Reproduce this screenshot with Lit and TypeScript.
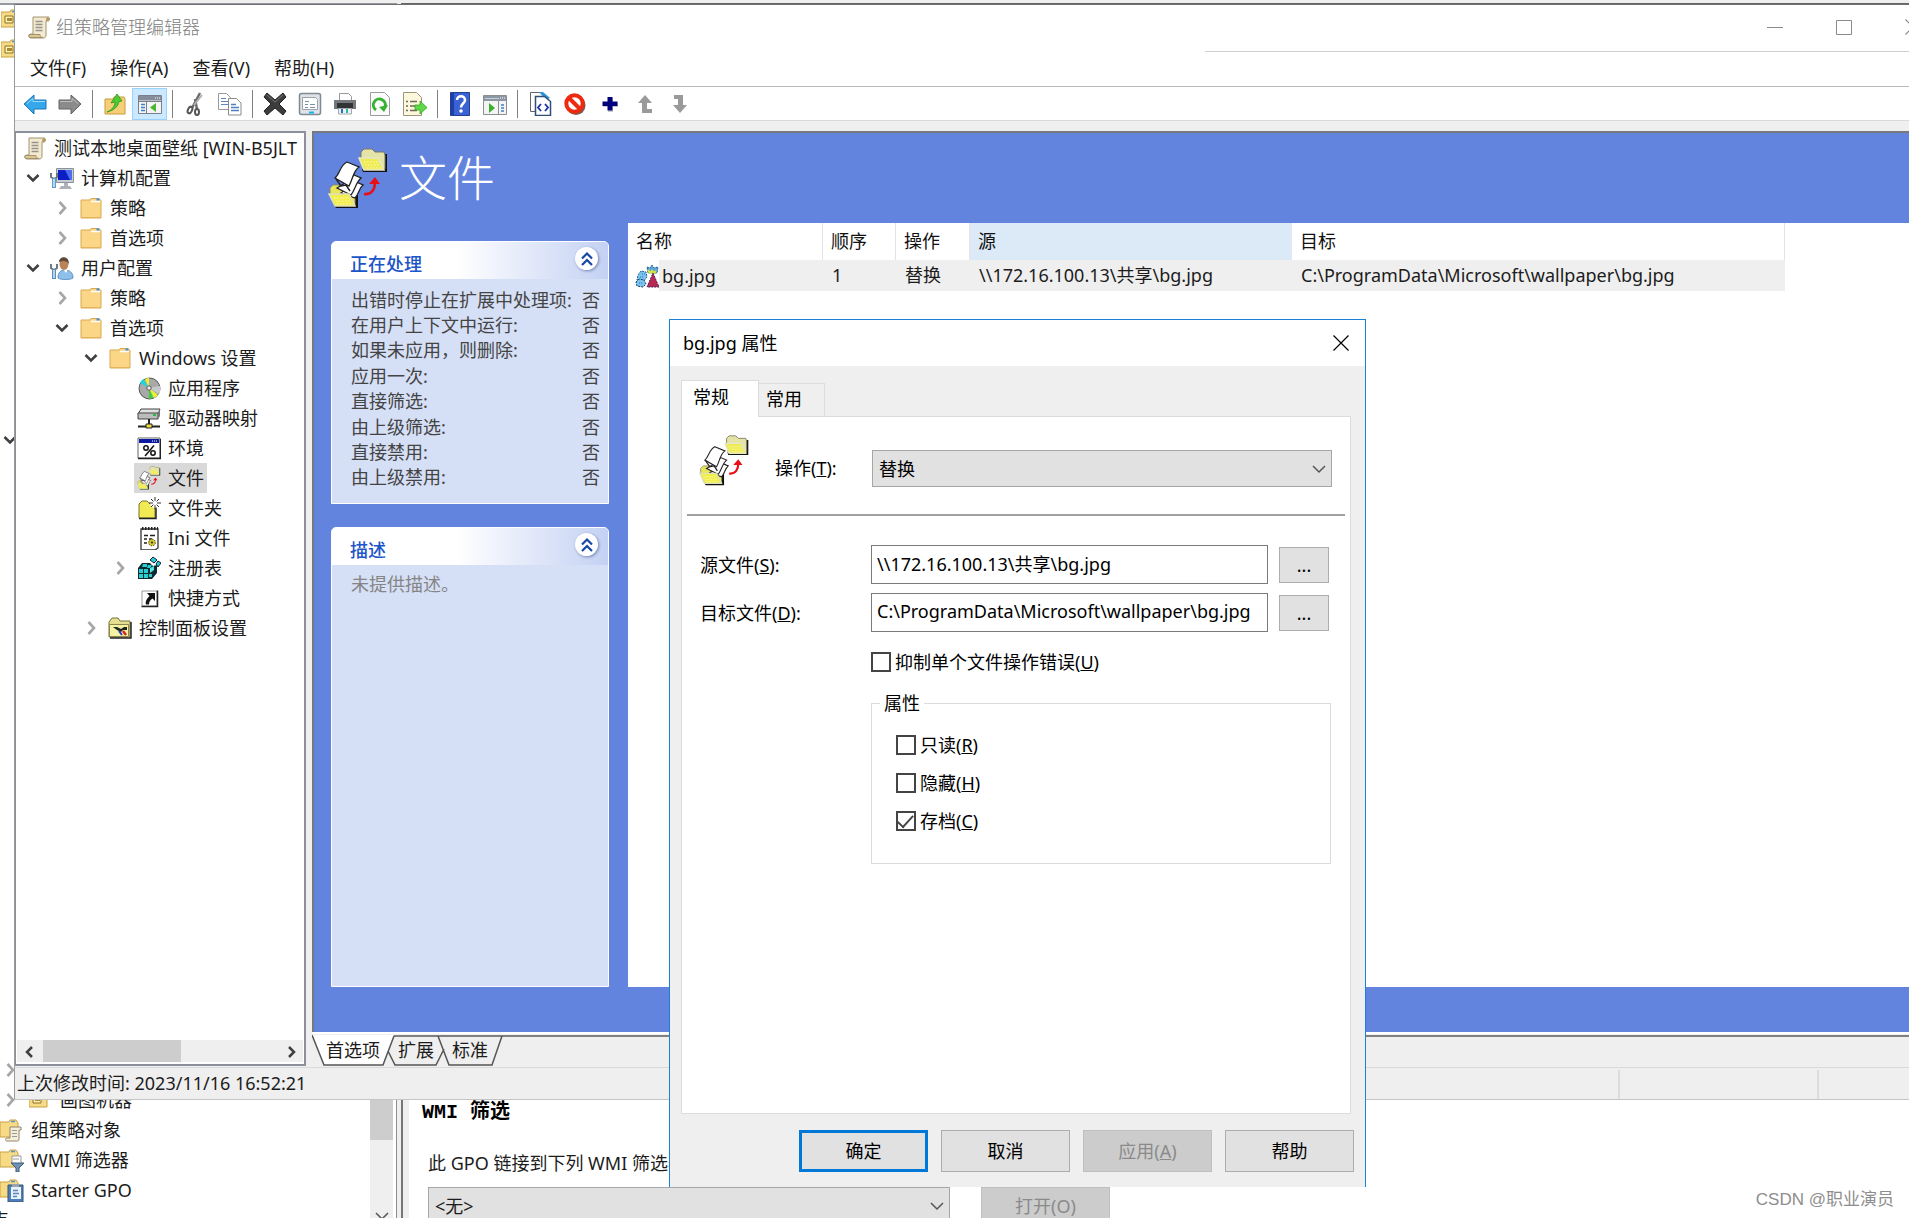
import { LitElement, html, svg, css, nothing, type TemplateResult } from "lit";
import { customElement, state } from "lit/decorators.js";
import { classMap } from "lit/directives/class-map.js";
import { styleMap } from "lit/directives/style-map.js";

const folderBody = svg`
  <path d="M2 4h9l1-1.500h8l2 2V22H2z" fill="#fbd686" stroke="#d9a94e"/>
  <path d="M12 5.500h9" stroke="#fff" stroke-width="1.500"/>
  <path d="M17.500 3.500h3" stroke="#3f8fdc" stroke-width="2"/>
  <path d="M2.500 21.500h19" stroke="#e5b35c"/>`;

const gpoFolder = svg`
  <path d="M0 4h9l1-2h6l2 3V19H0z" fill="#f6da85" stroke="#c9a040"/>
  <path d="M11 3.500h4" stroke="#4d95d8" stroke-width="1.500"/>`;

const moveFiles = svg`
  <path d="M56 6h3v18H35l-1-3z" fill="#111"/>
  <path d="M33 10V4l3-3h8l3 3h9l1 3v14H35z" fill="#e4e4a8" stroke="#77775a"/>
  <path d="M31 10h19l6 12H36z" fill="#efec52" stroke="#e6e6cc" stroke-width="1.500"/>
  <path d="M36 14h14M37 17h15M39 20h15" stroke="#fbfbc4" stroke-dasharray="1.500 1.500"/>
  <path d="M27 42h3v18H8l-2-3z" fill="#111"/>
  <path d="M2 46v-6l3-3h6l3 4h13v16H6z" fill="#e9e65c" stroke="#8b8b5a"/>
  <path d="M13 45c6-4 9-10 15-11l7 3c-4 3-4 9-8 13z" fill="#fff" stroke="#222" stroke-width="1.300"/>
  <path d="M9 40c6-3 12-8 17-13l7 3c-5 4-6 12-10 17z" fill="#fff" stroke="#222" stroke-width="1.300"/>
  <path d="M19 14l12 5c-6 4-6 12-10 19L7 30c5-4 5-13 12-16z" fill="#fff" stroke="#222" stroke-width="1.300"/>
  <path d="M8 31l5 7 5-1 4 6" fill="none" stroke="#222" stroke-width="1.500"/>
  <path d="M1 46h20l6 12H7z" fill="#f2ee4a" stroke="#e0e0bc" stroke-width="1.500"/>
  <path d="M6 50h14M8 53h14M9 56h15" stroke="#fbfbc4" stroke-dasharray="1.500 1.500"/>
  <path d="M36 46c8 1 11-5 11-12" fill="none" stroke="#e80f16" stroke-width="2.600"/>
  <path d="M41 36l6-7 5 7z" fill="#e80f16"/>`;

/** Glyphs drawn on a 24-unit grid, except where a view box is listed in BOXES. */
const ICONS: Record<string, TemplateResult> = {
  scroll: svg`
    <path d="M6 2h15c2 0 2 4 0 4h-2v14c0 2-1 3-3 3H4c-3 0-3-4 0-4h2z" fill="#f3ead2" stroke="#a3946e"/>
    <path d="M19 6c0-2 0-4 2-4s2 4 0 4z" fill="#b99b62"/>
    <path d="M2 19.500h11c0 2 1 3 3 3H4c-2 0-2-1-2-3z" fill="#dcc792" stroke="#a3946e"/>
    <path d="M8.500 6.500h7M8.500 9.500h7M8.500 12.500h7M8.500 15.500h7" stroke="#98948b" stroke-width="1.300"/>`,
  back: svg`<path d="M1 12l10-9v5h12v9H11v5z" fill="#35a7ea" stroke="#1877b8"/><path d="M4 11.500l6-5v3h12" stroke="#9bdcfb" fill="none"/>`,
  forward: svg`<path d="M23 12L13 3v5H1v9h12v5z" fill="#8b8b8b" stroke="#626262"/><path d="M2 9.500h12v-3l6 5" stroke="#bdbdbd" fill="none"/>`,
  upFolder: svg`
    <path d="M2 7h8l1-2h10l1 2v15H2z" fill="#f5ce76" stroke="#c99a3e"/>
    <path d="M4 20c5-2 8-6 8-10l-4 1 6-9 5 7-3 .500c-1 5-5 9-12 10.500z" fill="#4ecb34" stroke="#2b951a" stroke-width=".800"/>`,
  treePane: svg`
    <path d="M.500 3.500h23v18H.500z" fill="#f4f4f4" stroke="#77808c"/>
    <path d="M1 4h22v4.500H1z" fill="#858d9b"/><path d="M17 6h5" stroke="#fff" stroke-dasharray="1 1"/>
    <path d="M8.500 9v12M1 9.500h22" stroke="#77808c"/>
    <path d="M3 12.500h4M3 15.500h4M3 18.500h4" stroke="#3f7fc4" stroke-width="1.500"/>
    <path d="M18 11v9l-6-4.500z" fill="#4bb530"/>`,
  cut: svg`
    <path d="M17 1L9 16M12 7l2 10" stroke="#6d6d6d" stroke-width="2.500"/>
    <path d="M19 3l-8 10" stroke="#b0b0b0" stroke-width="2"/>
    <ellipse cx="7" cy="18" rx="2" ry="3.500" fill="none" stroke="#555" stroke-width="2" transform="rotate(25 7 18)"/>
    <ellipse cx="14" cy="20" rx="2" ry="3" fill="none" stroke="#555" stroke-width="2"/>`,
  copy: svg`
    <path d="M.500 1.500h8l4 4v12H.500z" fill="#fff" stroke="#9b9b9b"/><path d="M3 6.500h5M3 9.500h7M3 12.500h7" stroke="#5c88bd"/>
    <path d="M10.500 6.500h8l4.500 4.500v12H10.500z" fill="#fff" stroke="#8b8b8b"/><path d="M13 12.500h5M13 15.500h8M13 18.500h8" stroke="#4e80bd" stroke-width="1.300"/>`,
  remove: svg`<path d="M4 1l8 7 8-7 3 4-7 7 7 7-3 4-8-7-8 7-3-4 7-7-7-7z" fill="#3d3d3d" stroke="#222"/><path d="M4 3l8 7 8-7" stroke="#777" fill="none"/>`,
  properties: svg`
    <rect x="1.500" y="1.500" width="21" height="21" rx="2" fill="#dfe3e8" stroke="#808890" stroke-width="1.500"/>
    <path d="M4.500 5.500h13l2 2v10h-15z" fill="#fff" stroke="#9aa2aa"/>
    <path d="M7 9.500h4M7 12.500h3M12 12.500h5M7 15.500h3M12 15.500h5" stroke="#7a8fa8"/>
    <path d="M11 20.500h5" stroke="#12b4f0" stroke-width="2"/>`,
  print: svg`
    <path d="M6.500 1.500h9l3 3v6h-12z" fill="#fff" stroke="#999"/>
    <path d="M1 8h22v9H1z" fill="#74787d"/><path d="M4 11h16v5H4z" fill="#303236"/>
    <path d="M5.500 16.500h13V22h-13z" fill="#e8f4fb" stroke="#a8a8a8"/>
    <path d="M9 17v4" stroke="#2a6fc0" stroke-width="2"/><path d="M14 17v4" stroke="#35b59a" stroke-width="2"/>`,
  refresh: svg`
    <path d="M2.500 .500h14l5 5v18h-19z" fill="#fbfbfb" stroke="#9c9c9c"/>
    <path d="M8 18a6 6 0 1 1 9-3" fill="none" stroke="#35b230" stroke-width="3"/><path d="M20 13l-4 7-5-5z" fill="#35b230"/>`,
  exportList: svg`
    <path d="M.500 .500h13l5 5v18H.500z" fill="#fdf7dc" stroke="#9c967e"/>
    <path d="M3 9.500h2M7 9.500h7M3 14h2M7 14h6M3 18.500h2M7 18.500h7" stroke="#6d6a5c" stroke-width="1.500"/>
    <path d="M12 13h5V9l7 6.500-7 6.500v-4h-5z" fill="#5ed846" stroke="#36a524" stroke-width=".800"/>`,
  help: svg`
    <path d="M2.500 .500h19v23h-19z" fill="#3b62d2" stroke="#24408f"/><path d="M4.500 1v22" stroke="#1c3fae" stroke-width="3"/>
    <path d="M9 8c0-5 8-5 8 0 0 3.500-4 3.500-4 7.500" fill="none" stroke="#fff" stroke-width="2.500"/><circle cx="13" cy="19" r="1.800" fill="#fff"/>`,
  actionPane: svg`
    <path d="M.500 3.500h23v19H.500z" fill="#f4f4f4" stroke="#8a8f93"/>
    <path d="M1 4h22v5H1z" fill="#8d97a4"/><path d="M2 6.500h14" stroke="#c8d0d8"/><path d="M17 6h5" stroke="#fff" stroke-dasharray="1 1"/>
    <path d="M15.500 9v13" stroke="#8a8f93"/><path d="M6 11v10l6-5z" fill="#3fae2e"/>
    <path d="M18 13h3M18 16h3M18 19h3" stroke="#3f7fc4" stroke-width="1.500"/>`,
  pages: svg`
    <path d="M2.500 .500h11l3 3v16h-14z" fill="#fff" stroke="#666"/><path d="M11 0h4l7 6-4 2z" fill="#2b95d8"/>
    <path d="M7.500 4.500h9l6 5v14h-15z" fill="#fff" stroke="#2f4e78" stroke-width="1.500"/>
    <path d="M13 12l-3 3.500 3 3.500M17 12l3 3.500-3 3.500" fill="none" stroke="#1b2fa8" stroke-width="1.800"/>`,
  stop: svg`
    <circle cx="13" cy="13.500" r="9.500" fill="#7b5a50"/><circle cx="11.500" cy="11.500" r="8.200" fill="#fff" stroke="#ee2a10" stroke-width="4"/>
    <path d="M6 6l11 11" stroke="#ee2a10" stroke-width="4"/>`,
  add: svg`<path d="M10 6h5v5h5v4h-5v5h-5v-5H5v-4h5z" fill="#999" opacity=".500"/><path d="M9.500 5h5v4.500h5v4.500h-5v4.500h-5V14h-5V9.500h5z" fill="#00007c"/>`,
  up: svg`<path d="M12 3l7 8h-5v6h5v4H9V11H5z" fill="#9a9a9a"/>`,
  down: svg`<path d="M12 21l7-8h-4V3H6v4h4v6H5z" fill="#9a9a9a"/>`,
  computer: svg`
    <path d="M6.500 2.500h17v14h-17z" fill="#c9cdd2" stroke="#8c9299"/><path d="M8 4h14v10H8z" fill="#0c1fc4"/><path d="M15 4h7v10h-2z" fill="#4d6cf0"/>
    <path d="M11 20h9l2 3H9zM14 17h4v3h-4z" fill="#aeb2b8"/>
    <path d="M1 7v4l3 2 3-2V7" fill="none" stroke="#6f7880" stroke-width="2"/><path d="M4 12v10" stroke="#5f9ccb" stroke-width="4"/><path d="M4 13v8" stroke="#d4ebfa" stroke-width="1.500"/>`,
  user: svg`
    <path d="M8 22c0-6 3-8 7-8s8 2 8 8c-3 2-12 2-15 0z" fill="#8fc0ea" stroke="#5c93c4"/>
    <path d="M13 13l3 4 2-4z" fill="#fff"/><ellipse cx="14" cy="8" rx="4.500" ry="6" fill="#b98558"/><path d="M9 6c0-6 10-7 10 2-1-2-3-3-6-3z" fill="#5e4a3a"/>
    <path d="M1 8v4l3 2 3-2V8" fill="none" stroke="#6f7880" stroke-width="2"/><path d="M4 13v10" stroke="#5f8fb8" stroke-width="4"/><path d="M4 14v8" stroke="#d4ebfa" stroke-width="1.500"/>`,
  folder: folderBody,
  disc: svg`
    <circle cx="12.500" cy="12.500" r="10.500" fill="#a9a9a9" stroke="#555"/><path d="M12 12L3 7a10 10 0 0 1 3-4z" fill="#19d7e0"/>
    <path d="M12 12L8 3a10 10 0 0 1 4-1z" fill="#e9f233"/><path d="M12 12l9 7a10 10 0 0 1-4 3z" fill="#e9f233"/>
    <path d="M12 12l4 10a10 10 0 0 1-4 .500z" fill="#37d33a"/><path d="M12 12l11-2a10 10 0 0 1-1 8z" fill="#c8c8c8"/>
    <circle cx="12" cy="12" r="2.200" fill="#eee" stroke="#555"/>`,
  drive: svg`
    <path d="M4 3h19l-2 5H1z" fill="#e0e0e0" stroke="#444"/><path d="M1 7h20v6H1z" fill="#bcbcbc" stroke="#444"/><path d="M21 8l2-5v7l-2 3z" fill="#777"/>
    <path d="M16 9h3" stroke="#22c03a" stroke-width="2"/><path d="M12 13v6M1 20.500h22" stroke="#222" stroke-width="2"/><path d="M9 18h6v4H9z" fill="#e8dc3c" stroke="#222"/>`,
  environment: svg`
    <path d="M1 2h22v20H1z" fill="#fff" stroke="#666"/><path d="M2 3h20v4H2z" fill="#0b1aa0"/><path d="M15 5h6" stroke="#fff" stroke-dasharray="1 1"/>
    <circle cx="9" cy="12" r="2.200" fill="none" stroke="#111" stroke-width="1.500"/><circle cx="16" cy="17" r="2.200" fill="none" stroke="#111" stroke-width="1.500"/><path d="M17 9.500L8 20" stroke="#111" stroke-width="1.500"/>
    <path d="M1 22.500h22.500V3" fill="none" stroke="#222" stroke-width="1.500"/>`,
  files: moveFiles,
  newFolder: svg`
    <path d="M2 8l3-3h5l3 3h5v14H2z" fill="#f0ea55" stroke="#77742a"/><path d="M2 22.500h17V9" fill="none" stroke="#222" stroke-width="1.500"/>
    <circle cx="18" cy="7" r="5" fill="#fff"/><path d="M18 1v12M12 7h12M14 3l8 8M22 3l-8 8" stroke="#333"/><circle cx="18" cy="7" r="2.200" fill="#fff"/>`,
  ini: svg`
    <path d="M4 3h17v19l-3 2H4z" fill="#fff" stroke="#333" stroke-width="1.300"/><path d="M5 2.500h16" stroke="#222" stroke-width="3" stroke-dasharray="1.500 1.500"/>
    <path d="M7 9.500h4M13 9.500h5M7 13h3M12 13h3M7 17h3" stroke="#222" stroke-width="1.500"/><circle cx="15" cy="16.500" r="3.300" fill="#d8c92c" stroke="#4b4510" stroke-dasharray="1.500 1"/><circle cx="15" cy="16.500" r="1" fill="#222"/>`,
  registry: svg`
    <path d="M1 12l4-5h8l3 3 4-1v8l-5 6H1z" fill="#0d2b2f"/>
    <path d="M2 13h4v4H2zM7 13h4v4H7zM2 18h4v4H2zM7 18h4v4H7zM6 8h4v3H5zM11 9h4l-2 3h-3zM12 18h3v3h-3z" fill="#27cfd3"/>
    <path d="M13 12l4-2v4l-4 3z" fill="#57e4e6"/><path d="M16 1l4 3-3 3-4-3zM21 5l3 2-3 4-2-3z" fill="#27cfd3" stroke="#123"/>`,
  shortcut: svg`
    <path d="M5 5h15v15H5z" fill="#fff" stroke="#9a9a9a"/><path d="M4.500 20.500h16v-16" fill="none" stroke="#222" stroke-width="1.500"/>
    <path d="M10 7h8v8l-2.500-2.500C13 14 12 16 12 18.500H9c-1-3 1-6 3.500-8.500z" fill="#111"/>`,
  controlPanel: svg`
    <path d="M1 6l3-4h6l2 3h10v16H1z" fill="#e6df92" stroke="#77733c"/><path d="M1.500 8.500h19v12h-19z" fill="#f6f2a4" stroke="#8b8748"/><path d="M2 22h21V6" fill="none" stroke="#222" stroke-width="1.500"/>
    <path d="M5 11h4l4 2 3-2h3v3h-4l-2 2-4-2z" fill="#222"/><path d="M11 15l3 4" stroke="#2040c0" stroke-width="2"/><path d="M15 15l3 4" stroke="#e02020" stroke-width="2.500"/>`,
  item: svg`
    <path d="M3 11l3-4 5 1 1 5-4 5-6-2z" fill="#7cc3ef" stroke="#1c5f94" stroke-dasharray="2 1"/>
    <path d="M1 18l3-3 5 1 2 4-3 3-6-1z" fill="#7cc3ef" stroke="#123d66" stroke-dasharray="2 1"/>
    <path d="M7 10h3M5 13h4M4 19h4" stroke="#2a73b0" stroke-dasharray="1 1"/>
    <path d="M12 3l3 1 2-3 2 3 4-1-1 6h-9z" fill="#5fa7d9" stroke="#1c5f94" stroke-dasharray="2 1"/>
    <path d="M13 6l2 3 2-2 2 2 2-2" stroke="#d7e83a" stroke-width="2" fill="none"/>
    <path d="M18 9l6 14H12z" fill="#b82a55" stroke="#4a1f5e" stroke-dasharray="2 1"/>`,
  ou: svg`${gpoFolder}<path d="M4 8h8v7H4z" fill="#fff2b4" stroke="#8d7125"/><path d="M6 10h5v3H6z" fill="#a88a35"/>`,
  gpoScroll: svg`${gpoFolder}<path d="M10 9h11v3h-2v9c0 2-1 2-2 2H7c-2 0-2-3 0-3h3z" fill="#f5eeda" stroke="#91866a"/><path d="M12 12.500h5M12 15.500h5M12 18.500h5" stroke="#999"/>`,
  gpoFilter: svg`${gpoFolder}<path d="M12 8h9v8h-9z" fill="#fff" stroke="#999"/><path d="M13 11h6" stroke="#999"/><path d="M11 15h13l-5 5v4h-3v-4z" fill="#6f93b4" stroke="#3f5c78"/>`,
  gpoStarter: svg`${gpoFolder}<path d="M8 7h15v17H8z" fill="#4c7fb8" stroke="#35546f"/><path d="M11 9h10v12H11z" fill="#e9f2fb"/><path d="M12 6h7v3h-7z" fill="#9aa4ae"/><path d="M13 12.500h5M13 15.500h6M13 18.500h4" stroke="#5b85b5" stroke-width="1.500"/>`,
  open: svg`<path d="M6.500 9l5.500 5.500L17.500 9" fill="none" stroke="#404040" stroke-width="2.600"/>`,
  closed: svg`<path d="M9.500 6l5.500 6-5.500 6" fill="none" stroke="#a6a6a6" stroke-width="2.600"/>`,
  caret: svg`<path d="M6 9l6 6 6-6" fill="none" stroke="#555" stroke-width="1.500"/>`,
  left: svg`<path d="M15 7l-5 5 5 5" fill="none" stroke="#404040" stroke-width="2.500"/>`,
  right: svg`<path d="M10 7l5 5-5 5" fill="none" stroke="#404040" stroke-width="2.500"/>`,
  chevrons: svg`<path d="M7 11.500l5-5 5 5M7 18l5-5 5 5" fill="none" stroke="#1546a8" stroke-width="2.200"/>`,
  minimise: svg`<path d="M4 12.500h16" stroke="#8a8a8a"/>`,
  maximise: svg`<path d="M4.500 5.500h15v14h-15z" fill="none" stroke="#8a8a8a"/>`,
  close: svg`<path d="M4.500 4.500l15 15M19.500 4.500l-15 15" stroke="currentColor" stroke-width="1.200"/>`,
};

const BOXES: Record<string, string> = { files: "0 0 61 61" };

const icon = (name: string, cls = "ico") =>
  html`<svg class=${cls} viewBox=${BOXES[name] ?? "0 0 24 24"} aria-hidden="true">${ICONS[name]}</svg>`;

interface Node {
  level: number;
  label: string;
  icon: string;
  toggle?: "open" | "closed";
}

const TREE: Node[] = [
  { level: 0, label: "测试本地桌面壁纸 [WIN-B5JLT", icon: "scroll" },
  { level: 1, label: "计算机配置", icon: "computer", toggle: "open" },
  { level: 2, label: "策略", icon: "folder", toggle: "closed" },
  { level: 2, label: "首选项", icon: "folder", toggle: "closed" },
  { level: 1, label: "用户配置", icon: "user", toggle: "open" },
  { level: 2, label: "策略", icon: "folder", toggle: "closed" },
  { level: 2, label: "首选项", icon: "folder", toggle: "open" },
  { level: 3, label: "Windows 设置", icon: "folder", toggle: "open" },
  { level: 4, label: "应用程序", icon: "disc" },
  { level: 4, label: "驱动器映射", icon: "drive" },
  { level: 4, label: "环境", icon: "environment" },
  { level: 4, label: "文件", icon: "files" },
  { level: 4, label: "文件夹", icon: "newFolder" },
  { level: 4, label: "Ini 文件", icon: "ini" },
  { level: 4, label: "注册表", icon: "registry", toggle: "closed" },
  { level: 4, label: "快捷方式", icon: "shortcut" },
  { level: 3, label: "控制面板设置", icon: "controlPanel", toggle: "closed" },
];

const TOOLS: [string, string][][] = [
  [["back", "后退"], ["forward", "前进"]],
  [["upFolder", "上一级"], ["treePane", "显示/隐藏控制台树"]],
  [["cut", "剪切"], ["copy", "复制"]],
  [["remove", "删除"], ["properties", "属性"], ["print", "打印"], ["refresh", "刷新"], ["exportList", "导出列表"]],
  [["help", "帮助"], ["actionPane", "显示/隐藏操作窗格"]],
  [["pages", "显示 XML"], ["stop", "禁用"], ["add", "新建"], ["up", "上移"], ["down", "下移"]],
];

const PROCESSING = [
  "出错时停止在扩展中处理项:",
  "在用户上下文中运行:",
  "如果未应用，则删除:",
  "应用一次:",
  "直接筛选:",
  "由上级筛选:",
  "直接禁用:",
  "由上级禁用:",
];

/** Rows of the console behind the editor, keyed by their place in its list. */
const CONSOLE_ROWS: Record<number, { cls: string; icons: string[]; label?: string }> = {
  0: { cls: "edge", icons: ["ou"] },
  1: { cls: "edge", icons: ["ou"] },
  14: { cls: "arrow", icons: ["open"] },
  35: { cls: "arrow", icons: ["closed"] },
  36: { cls: "arrow", icons: ["closed", "ou"], label: "画图机器" },
  37: { cls: "leaf", icons: ["gpoScroll"], label: "组策略对象" },
  38: { cls: "leaf", icons: ["gpoFilter"], label: "WMI 筛选器" },
  39: { cls: "leaf", icons: ["gpoStarter"], label: "Starter GPO" },
  40: { cls: "site", icons: [], label: "站点" },
};

@customElement("app-root")
export class AppRoot extends LitElement {
  @state() private selected = "文件";
  @state() private page = 0;

  static styles = css`
    :host {
      display: block;
      font: 18px/24px "Noto Sans", "Noto Sans CJK SC", sans-serif;
      color: #1c1c1c;
    }
    * { box-sizing: border-box; }
    button, input, select { font: inherit; color: inherit; border-radius: 0; margin: 0; }
    button { border: 0; padding: 0; background: none; white-space: nowrap; }
    ul, dl, dd, h1, h2, p { margin: 0; padding: 0; font-weight: 400; }
    ul { list-style: none; }
    svg { display: block; flex: none; }
    .ico { width: 24px; height: 24px; }
    .desktop { position: relative; min-height: 100vh; overflow: hidden; background: #fff; }

    /* console window behind */
    .console { position: absolute; inset: 0 0 -10px; display: flex; gap: 4px; background: #efefef; padding-top: 3px; }
    .con-left { width: 397px; display: flex; background: #fff; border-top: 2px solid #96999f; border-right: 1px solid #8b8e98; overflow: hidden; }
    .con-tree { flex: 1; min-width: 0; overflow: hidden; }
    .con-tree li { display: flex; align-items: center; height: 30px; gap: 7px; white-space: nowrap; }
    .con-tree .edge { padding-left: 1px; }
    .con-tree .arrow .ico:first-child { margin-left: -2px; }
    .con-tree .site { margin-left: -27px; }
    .con-bar { width: 23px; margin-right: 3px; background: #efefef; display: flex; flex-direction: column; justify-content: space-between; }
    .con-thumb { background: #cdcdcd; height: 1135px; }
    .con-right { flex: 1; display: flex; flex-direction: column; justify-content: flex-end; background: #fff; border-top: 2px solid #666; border-left: 2px solid #777; padding: 0 0 4px 19px; box-shadow: inset 6px 0 #efefef; }
    .con-title { font: 700 20px/24px "Liberation Mono", "Noto Sans CJK SC", monospace; color: #000; margin-bottom: 26px; }
    .con-label { margin: 0 0 12px 6px; }
    .con-row { display: flex; gap: 31px; margin-left: 6px; }

    .drop { position: relative; display: flex; }
    .drop select { appearance: none; flex: 1; height: 37px; border: 1px solid #a6a6a6; background: #e1e1e1; padding: 0 6px; outline: 0; }
    .drop .ico { position: absolute; right: 1px; top: 7px; pointer-events: none; }
    .con-row .drop { width: 522px; }
    .push { height: 42px; width: 129px; border: 1px solid #adadad; background: #e1e1e1; color: #000; }
    .push:disabled { background: #ccc; border-color: #bfbfbf; color: #8a8a8a; }
    .push.default { border: 3px solid #0078d7; }
    .con-row .push { height: 37px; }

    /* editor window */
    .editor { position: absolute; left: 14px; right: 0; top: 4px; bottom: 118px; display: flex; flex-direction: column; background: #efefef; border: 1px solid #9a9a9a; border-right: 0; border-top-color: #707070; border-bottom-color: #c4c4c4; }
    .caption { display: flex; align-items: center; height: 46px; background: #fff; padding: 0 0 2px 12px; gap: 5px; overflow: hidden; }
    .caption h1 { font-size: 18px; line-height: 24px; font-weight: 300; color: #808080; flex: 1; }
    .caption-tools { display: flex; gap: 45px; margin-right: -16px; color: #8a8a8a; }
    .rule { background: #fff; }
    .rule::before { content: ""; display: block; margin-left: 1190px; height: 1px; background: #cfcfcf; }
    .menu { display: flex; gap: 24px; height: 35px; padding: 0 0 2px 15px; background: #fff; border-bottom: 1px solid #b9b9b9; }
    .tools { display: flex; align-items: center; height: 34px; padding-left: 2px; background: #fff; border-bottom: 1px solid #dadada; }
    .tool { width: 35px; height: 32px; display: grid; place-items: center; }
    .tool.on { background: #cce8ff; box-shadow: inset 0 0 0 1px #99d1ff; }
    .sep { width: 10px; height: 28px; display: flex; justify-content: center; }
    .sep::before { content: ""; width: 1px; background: #808080; }

    .work { flex: 1; min-height: 0; display: flex; gap: 6px; padding-top: 10px; }
    .side { width: 291px; display: flex; flex-direction: column; justify-content: space-between; background: #fff; border: 2px solid #8d909b; border-left-width: 1px; overflow: hidden; }
    .tree li { display: flex; align-items: center; height: 30px; white-space: nowrap; }
    .toggle { width: 24px; height: 24px; margin-right: 2px; }
    .node { display: flex; align-items: center; gap: 7px; height: 30px; padding: 0 3px; }
    .node.sel { background: #d9d9d9; }
    .hbar { display: flex; height: 22px; margin: 0 1px 2px; background: #efefef; }
    .hbar-track { flex: 1; }
    .hbar-thumb { width: 58%; height: 22px; margin-left: 2px; background: #cdcdcd; }

    .main { flex: 1; min-width: 0; display: flex; flex-direction: column; }
    .blue { flex: 1; min-height: 0; display: flex; flex-direction: column; gap: 15px; background: #6284df; border: solid #77797c; border-width: 2px 0 0 2px; padding: 15px 0 45px 14px; }
    .hero { display: flex; align-items: center; gap: 10px; height: 60px; color: #fff; }
    .hero .ico { width: 61px; height: 61px; }
    .hero h2 { font-size: 48px; line-height: 60px; font-weight: 300; }
    .columns { flex: 1; min-height: 0; display: flex; gap: 19px; }
    .panels { width: 278px; margin: 18px 0 0 3px; display: flex; flex-direction: column; gap: 23px; }
    .panel { display: flex; flex-direction: column; border: 1px solid #fff; border-radius: 5px 5px 0 0; background: #d5dff6; }
    .panel.grow { flex: 1; }
    .panel header { display: flex; justify-content: space-between; height: 37px; padding: 5px 10px 0 18px; border-radius: 4px 4px 0 0; background: linear-gradient(90deg, #fff 45%, #c4d1f3); }
    .panel h3 { margin: 5px 0 0; font-size: 18px; line-height: 24px; font-weight: 500; color: #1c55c9; }
    .fold { width: 23px; height: 23px; border-radius: 12px; background: #fff; box-shadow: 1px 1px 3px #7788b8; display: grid; place-items: center; }
    .facts { height: 224px; padding: 8px 8px 13px 19px; display: flex; flex-direction: column; color: #444; }
    .facts div { flex: 1; display: flex; align-items: center; justify-content: space-between; }
    .note { padding: 7px 19px; color: #858585; }
    .list { flex: 1; min-width: 0; background: #fff; overflow: hidden; }
    table { table-layout: fixed; width: 1157px; border-spacing: 0; white-space: nowrap; }
    th { height: 37px; padding: 0 8px 2px; font-weight: 400; text-align: left; border-right: 1px solid #e3e3e3; color: #111; }
    th.sorted { background: #dce9f7; border-right: 0; }
    td { height: 31px; padding: 0 9px 2px; background: #efefef; }
    td.name { padding: 0 0 0 7px; background: linear-gradient(90deg, #fff 31px, #efefef 31px); }
    .name span { display: flex; align-items: center; gap: 3px; }
    .c1 { width: 195px; } .c2 { width: 73px; } .c3 { width: 74px; } .c4 { width: 322px; }

    .views { position: relative; display: flex; height: 34px; padding: 4px 0 0 14px; gap: 18px; border-top: 2px solid #fff; }
    .views svg { position: absolute; left: 0; top: 1px; }
    .views::before { content: ""; position: absolute; left: 80px; right: 0; top: 1px; height: 2px; background: #808080; }
    .views button { position: relative; height: 24px; }
    .status { display: flex; justify-content: space-between; height: 32px; margin-top: 1px; border-top: 1px solid #dadada; }
    .status p { padding: 3px 2px; }
    .cells { display: flex; padding-top: 2px; }
    .cells i { width: 199px; border-left: 2px solid #dcdcdc; }
    .cells i:last-child { width: 92px; }

    /* property sheet */
    .dialog { position: absolute; left: 669px; top: 319px; width: 697px; background: #efefef; border: 1px solid #1a80d6; border-bottom: 0; color: #000; }
    .dialog-bar { display: flex; align-items: center; justify-content: space-between; height: 46px; padding: 0 12px 1px 13px; background: #fff; }
    .dialog-bar h2 { font-size: 18px; line-height: 24px; }
    .tabs { display: flex; align-items: flex-end; height: 50px; padding-left: 11px; }
    .tab { height: 33px; width: 66px; padding: 0 8px 2px 7px; text-align: left; border: 1px solid #dcdcdc; border-width: 1px 1px 0 0; }
    .tab.on { position: relative; height: 37px; width: 78px; margin-bottom: -1px; padding: 0 11px 4px; background: #fff; border-width: 1px 1px 0; }
    .page { margin: 0 14px 0 11px; min-height: 698px; background: #fff; border: 1px solid #dcdcdc; padding-top: 18px; }
    .action { display: grid; grid-template-columns: 76px 97px 1fr; align-items: end; height: 52px; margin: 0 18px 27px 17px; }
    .action > .ico { width: 51px; height: 51px; align-self: start; }
    .action label { line-height: 37px; }
    .line { border: 0; border-top: 2px solid #a0a0a0; margin: 0 5px 29px; }
    .fields { display: grid; grid-template-columns: 171px 397px 50px; align-items: center; row-gap: 9px; margin: 0 18px 20px; }
    .fields .push { width: 50px; height: 36px; margin-left: 11px; }
    .fields input { min-width: 0; height: 39px; border: 1px solid #7a7a7a; background: #fff; padding: 0 4px 3px 5px; outline: 0; }
    .attrs { margin-left: 189px; margin-right: 19px; }
    .check { display: flex; align-items: center; gap: 4px; height: 20px; }
    .check input { appearance: none; width: 20px; height: 20px; border: 2px solid #444; background: #fff; display: grid; place-items: center; }
    .check input:checked::before { content: ""; width: 14px; height: 7px; border: solid #444; border-width: 0 0 2px 2px; transform: rotate(-48deg) translate(1px, -2px); }
    fieldset { display: grid; gap: 18px; margin: 21px 0 0; padding: 22px 24px 32px; border: 1px solid #dcdcdc; min-width: 0; }
    legend { padding: 0 4px; margin-left: -16px; line-height: 20px; }
    .buttons { display: flex; justify-content: flex-end; gap: 13px; padding: 16px 11px 15px; }

    .mark { position: absolute; right: 15px; bottom: 6px; font: 17px/24px "Liberation Sans", "Noto Sans CJK SC", sans-serif; color: #8d8d8d; }
  `;

  private consoleWindow() {
    return html`<section class="console" aria-label="组策略管理">
      <div class="con-left">
        <ul class="con-tree">
          ${Array.from({ length: 41 }, (_, i) => {
            const row = CONSOLE_ROWS[i];
            return html`<li class=${row?.cls ?? "blank"}>${row?.icons.map((n) => icon(n)) ?? nothing}${row?.label ?? nothing}</li>`;
          })}
        </ul>
        <div class="con-bar"><div class="con-thumb"></div>${icon("caret")}</div>
      </div>
      <div class="con-right">
        <h2 class="con-title">WMI 筛选</h2>
        <label class="con-label" for="wmi">此 GPO 链接到下列 WMI 筛选器:</label>
        <div class="con-row">
          <div class="drop"><select id="wmi"><option>&lt;无&gt;</option></select>${icon("caret")}</div>
          <button class="push" disabled>打开(O)</button>
        </div>
      </div>
    </section>`;
  }

  private indent(n: Node) {
    if (n.level === 0) return 4;
    return n.toggle ? n.level * 29 - 24 : n.level * 29 + 2;
  }

  private tree() {
    return html`<ul class="tree">
      ${TREE.map(
        (n, i) => html`<li style=${styleMap({ paddingLeft: `${this.indent(n)}px` })}>
          ${n.toggle ? html`<button class="toggle" aria-label=${n.label}>${icon(n.toggle)}</button>` : nothing}
          <button class=${classMap({ node: true, sel: this.selected === n.label && i > 0 })} @click=${() => (this.selected = n.label)}>
            ${icon(n.icon)}<span>${n.label}</span>
          </button>
        </li>`
      )}
    </ul>`;
  }

  private editor() {
    return html`<section class="editor">
      <div class="caption">
        ${icon("scroll")}
        <h1>组策略管理编辑器</h1>
        <div class="caption-tools">
          <button aria-label="最小化">${icon("minimise")}</button>
          <button aria-label="最大化">${icon("maximise")}</button>
          <button aria-label="关闭">${icon("close")}</button>
        </div>
      </div>
      <div class="rule"></div>
      <nav class="menu">${["文件(F)", "操作(A)", "查看(V)", "帮助(H)"].map((m) => html`<button>${m}</button>`)}</nav>
      <div class="tools">
        ${TOOLS.map(
          (g, i) => html`${i ? html`<span class="sep"></span>` : nothing}${g.map(
            ([name, title]) => html`<button class=${classMap({ tool: true, on: name === "treePane" })} aria-label=${title}>${icon(name)}</button>`
          )}`
        )}
      </div>
      <div class="work">
        <div class="side">
          ${this.tree()}
          <div class="hbar">${icon("left")}<div class="hbar-track"><div class="hbar-thumb"></div></div>${icon("right")}</div>
        </div>
        <div class="main">
          <div class="blue">
            <div class="hero">${icon("files")}<h2>文件</h2></div>
            <div class="columns">
              <div class="panels">
                <section class="panel">
                  <header><h3>正在处理</h3><button class="fold" aria-label="折叠">${icon("chevrons")}</button></header>
                  <dl class="facts">${PROCESSING.map((t) => html`<div><dt>${t}</dt><dd>否</dd></div>`)}</dl>
                </section>
                <section class="panel grow">
                  <header><h3>描述</h3><button class="fold" aria-label="折叠">${icon("chevrons")}</button></header>
                  <p class="note">未提供描述。</p>
                </section>
              </div>
              <div class="list">
                <table>
                  <colgroup><col class="c1" /><col class="c2" /><col class="c3" /><col class="c4" /><col /></colgroup>
                  <thead>
                    <tr><th>名称</th><th>顺序</th><th>操作</th><th class="sorted">源</th><th>目标</th></tr>
                  </thead>
                  <tbody>
                    <tr>
                      <td class="name"><span>${icon("item")}bg.jpg</span></td>
                      <td>1</td>
                      <td>替换</td>
                      <td>\\\\172.16.100.13\\共享\\bg.jpg</td>
                      <td>C:\\ProgramData\\Microsoft\\wallpaper\\bg.jpg</td>
                    </tr>
                  </tbody>
                </table>
              </div>
            </div>
          </div>
          <div class="views">
            <svg width="196" height="32" viewBox="0 0 196 32" fill="none" stroke="#555" stroke-width="1.500">
              <path d="M0 0L12 30H71L82 0z" fill="#fff" stroke="none" />
              <path d="M0 0L12 30H71L82 1M76 16l7 14h41l8-16M126 1l11 29h43L190 1" />
            </svg>
            ${["首选项", "扩展", "标准"].map((t) => html`<button>${t}</button>`)}
          </div>
        </div>
      </div>
      <footer class="status">
        <p>上次修改时间: 2023/11/16 16:52:21</p>
        <div class="cells"><i></i><i></i></div>
      </footer>
    </section>`;
  }

  private check(id: string, text: string, key: string, checked = false) {
    return html`<div class="check"><input type="checkbox" id=${id} ?checked=${checked} /><label for=${id}>${text}(<u>${key}</u>)</label></div>`;
  }

  private dialog() {
    return html`<section class="dialog" role="dialog" aria-labelledby="sheet-title">
      <div class="dialog-bar">
        <h2 id="sheet-title">bg.jpg 属性</h2>
        <button aria-label="关闭">${icon("close")}</button>
      </div>
      <div class="tabs" role="tablist">
        ${["常规", "常用"].map(
          (t, i) => html`<button role="tab" class=${classMap({ tab: true, on: this.page === i })} @click=${() => (this.page = i)}>${t}</button>`
        )}
      </div>
      <div class="page">
        <div class="action">
          ${icon("files")}
          <label for="act">操作(<u>T</u>):</label>
          <div class="drop"><select id="act"><option>替换</option><option>创建</option><option>更新</option><option>删除</option></select>${icon("caret")}</div>
        </div>
        <hr class="line" />
        <div class="fields">
          <label for="src">源文件(<u>S</u>):</label>
          <input id="src" type="text" .value=${"\\\\172.16.100.13\\共享\\bg.jpg"} />
          <button class="push" aria-label="浏览源文件">...</button>
          <label for="dst">目标文件(<u>D</u>):</label>
          <input id="dst" type="text" .value=${"C:\\ProgramData\\Microsoft\\wallpaper\\bg.jpg"} />
          <button class="push" aria-label="浏览目标文件">...</button>
        </div>
        <div class="attrs">
          ${this.check("suppress", "抑制单个文件操作错误", "U")}
          <fieldset>
            <legend>属性</legend>
            ${this.check("ro", "只读", "R")} ${this.check("hid", "隐藏", "H")} ${this.check("arc", "存档", "C", true)}
          </fieldset>
        </div>
      </div>
      <div class="buttons">
        <button class="push default">确定</button>
        <button class="push">取消</button>
        <button class="push" disabled>应用(<u>A</u>)</button>
        <button class="push">帮助</button>
      </div>
    </section>`;
  }

  render() {
    return html`<main class="desktop">
      ${this.consoleWindow()} ${this.editor()} ${this.dialog()}
      <div class="mark">CSDN @职业演员</div>
    </main>`;
  }
}
